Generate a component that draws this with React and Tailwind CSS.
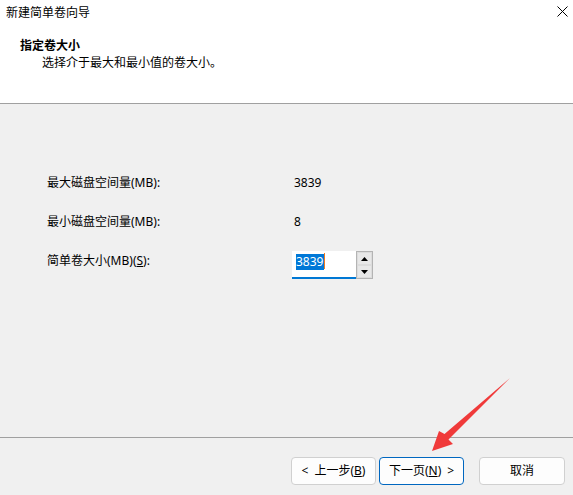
import React from "react";

function Button({ children, primary, width }) {
  return (
    <button
      className={`h-[28px] ${width} rounded-[4px] border bg-[#fdfdfd] text-[12px] leading-none text-black ${
        primary ? "border-[#0067c0]" : "border-[#d0d0d0]"
      }`}
    >
      {children}
    </button>
  );
}

function SpinBox({ value }) {
  return (
    <div className="flex h-[28px] ml-[-2px]">
      <div className="relative w-[64px] bg-white pl-[4px] pt-[2px]">
        <span className="inline-block h-[16px] bg-[#0078d7] text-white leading-[16px] pr-[1px]">
          {value}
        </span>
        <span className="inline-block h-[16px] w-[1px] bg-[#f07a20] align-top"></span>
        <div className="absolute left-0 right-0 bottom-0 h-[2px] bg-[#0078d4]"></div>
      </div>
      <div className="flex w-[17px] flex-col border border-[#b4b4b4] bg-[#f0f0f0]">
        <div className="flex flex-1 items-center justify-center border border-[#dcdcdc] bg-[#e8e8e8]">
          <svg width="7" height="4" viewBox="0 0 7 4">
            <path d="M0 4 L3.5 0 L7 4 Z" fill="#000" />
          </svg>
        </div>
        <div className="flex flex-1 items-center justify-center border border-[#dcdcdc] bg-[#e8e8e8]">
          <svg width="7" height="4" viewBox="0 0 7 4">
            <path d="M0 0 L3.5 4 L7 0 Z" fill="#000" />
          </svg>
        </div>
      </div>
    </div>
  );
}

export default function App() {
  return (
    <div className="relative flex h-[495px] w-[573px] flex-col overflow-hidden bg-[#f0f0f0] font-['Noto_Sans','Noto_Sans_CJK_SC',sans-serif] text-[12px] text-black">
      {/* Header */}
      <div className="h-[104px] border-b border-[#a0a0a0] bg-white">
        <div className="flex h-[26px] items-center justify-between pl-[6px] pr-[5px]">
          <span className="leading-[16px]">新建简单卷向导</span>
          <svg width="11" height="11" viewBox="0 0 11 11" className="mb-[3px]">
            <path d="M0.5 0.5 L10.5 10.5 M10.5 0.5 L0.5 10.5" stroke="#000" strokeWidth="1" />
          </svg>
        </div>
        <div className="mt-[12px] pl-[20px] font-bold leading-[16px]">指定卷大小</div>
        <div className="mt-[1px] pl-[42px] leading-[16px]">选择介于最大和最小值的卷大小。</div>
      </div>

      {/* Body */}
      <div className="flex-1 pl-[47px] pt-[71px]">
        <div className="flex h-[16px] leading-[16px]">
          <span className="w-[247px]">最大磁盘空间量(MB):</span>
          <span>3839</span>
        </div>
        <div className="mt-[23px] flex h-[16px] leading-[16px]">
          <span className="w-[247px]">最小磁盘空间量(MB):</span>
          <span>8</span>
        </div>
        <div className="mt-[21px] flex items-start">
          <span className="mt-[2px] w-[247px] leading-[16px]">
            简单卷大小(MB)(<span className="underline">S</span>):
          </span>
          <SpinBox value="3839" />
        </div>
      </div>

      {/* Footer */}
      <div className="flex h-[58px] items-start justify-end border-t border-[#a0a0a0] pr-[8px] pt-[19px]">
        <Button width="w-[85px]">
          <span className="mr-[6px]">&lt;</span>上一步(<span className="underline">B</span>)
        </Button>
        <div className="w-[3px]"></div>
        <Button width="w-[85px]" primary>
          下一页(<span className="underline">N</span>)<span className="ml-[6px]">&gt;</span>
        </Button>
        <div className="w-[15px]"></div>
        <Button width="w-[86px]">取消</Button>
      </div>

      {/* Red annotation arrow */}
      <svg
        className="pointer-events-none absolute left-0 top-0"
        width="573"
        height="495"
        viewBox="0 0 573 495"
      >
        <polygon
          points="432,451 439,431 444.5,434 510,378 448.5,439.5 453,444"
          fill="#f03a3a"
        />
      </svg>
    </div>
  );
}
